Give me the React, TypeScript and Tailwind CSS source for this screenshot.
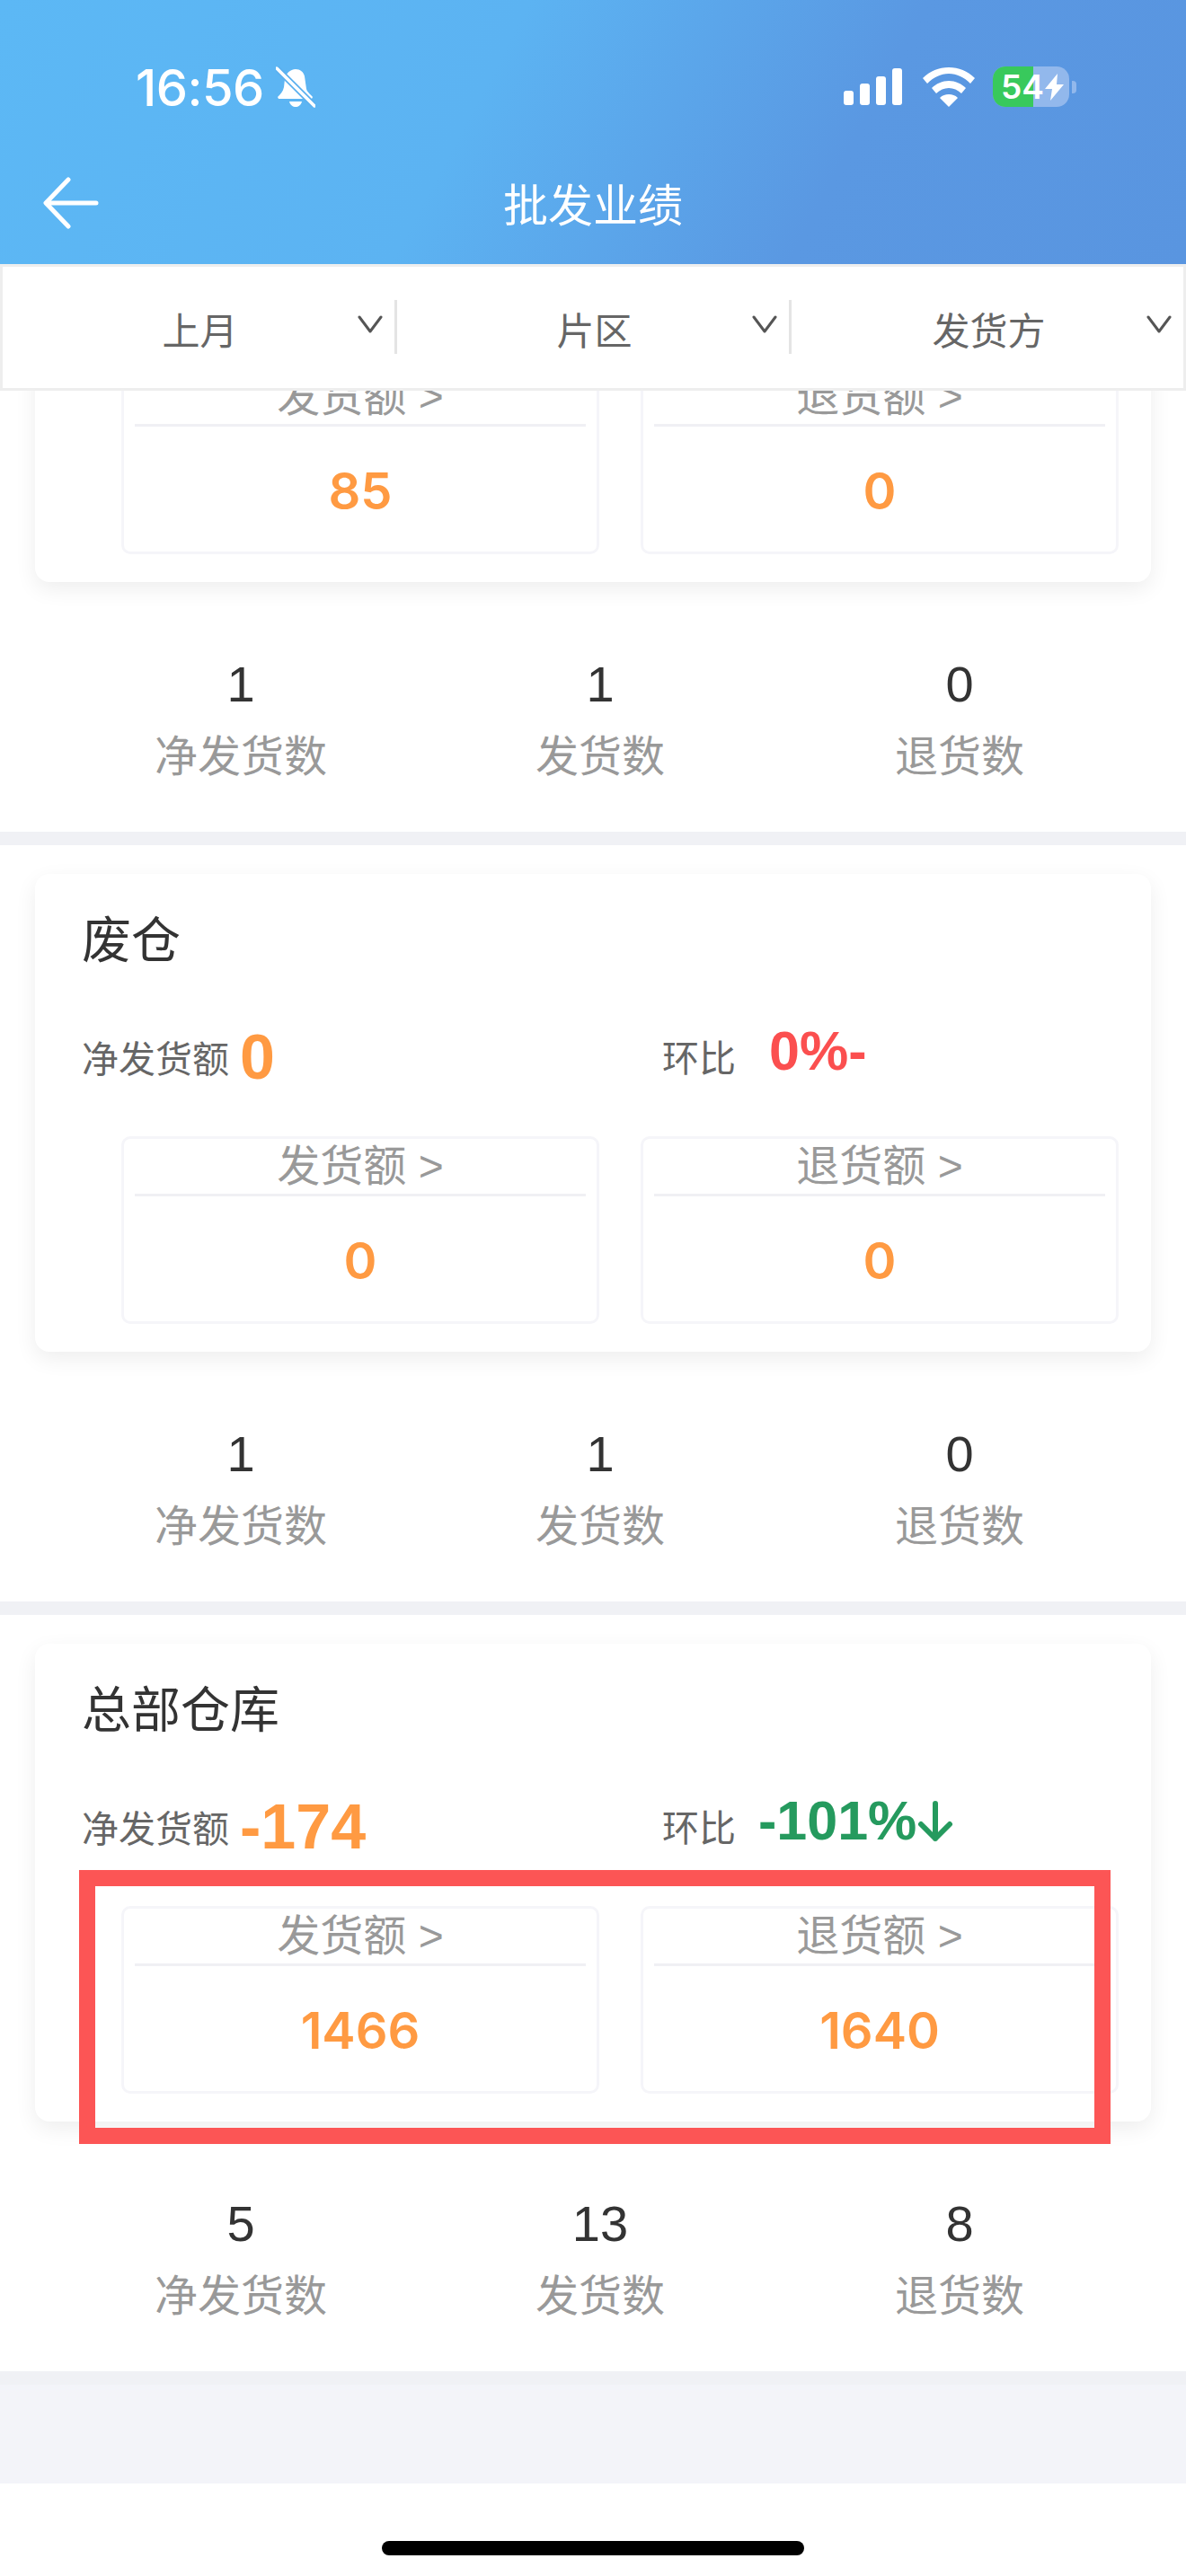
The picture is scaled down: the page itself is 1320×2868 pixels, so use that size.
import React from "react";

const CJK = '"Liberation Sans","Noto Sans CJK SC",sans-serif';
const NUM = '"Inter","Noto Sans CJK SC",sans-serif';

function Signal() {
  return (
    <svg width="66" height="42" viewBox="0 0 66 42" fill="white">
      <rect x="0" y="25" width="11" height="16" rx="3" />
      <rect x="18" y="17" width="11" height="24" rx="3" />
      <rect x="36" y="9" width="11" height="32" rx="3" />
      <rect x="54" y="0" width="11" height="41" rx="3" />
    </svg>
  );
}

function Wifi() {
  return (
    <svg width="58" height="44" viewBox="0 0 58 44" fill="white">
      <path d="M29 0C18 0 8 4 0 12l5 6C12 11 20 7 29 7s17 4 24 11l5-6C50 4 40 0 29 0z" />
      <path d="M29 15c-7 0-14 3-19 8l5 6c4-4 9-6 14-6s10 2 14 6l5-6c-5-5-12-8-19-8z" />
      <path d="M29 30c-4 0-7 1-10 4l10 10 10-10c-3-3-6-4-10-4z" />
    </svg>
  );
}

function Bell() {
  return (
    <svg width="44" height="46" viewBox="0 0 44 46" fill="white" className="ml-[13px]">
      <path d="M22 3c5 0 9 3 10 8l2 14c1 4 5 6 7 9l-1 2H3l-1-2c3-3 6-6 7-11l1-9c1-6 6-11 12-11z" />
      <path d="M15 39h14c-1 4-4 6-7 6s-6-2-7-6z" />
      <path d="M0 1l42 42" stroke="#5bb0ef" strokeWidth="7" />
      <path d="M1 2l42 42" stroke="white" strokeWidth="3.5" strokeLinecap="round" />
    </svg>
  );
}

function Battery() {
  return (
    <div className="flex items-center">
      <div className="relative w-[85px] h-[45px] rounded-[14px] bg-[#92b8ec] overflow-hidden">
        <div className="w-[45px] h-full bg-[#38c95c]" />
        <div className="absolute left-[9px] top-0 h-full flex items-center text-white text-[37px] font-semibold leading-none" style={{ fontFamily: NUM }}>
          54
        </div>
        <svg className="absolute left-[58px] top-[8px]" width="22" height="30" viewBox="0 0 22 30" fill="white">
          <path d="M14 0L0 17h8L6 30l15-18h-8z" />
        </svg>
      </div>
      <div className="ml-[3px] w-[5px] h-[14px] rounded-r-[4px] bg-[#92b8ec]" />
    </div>
  );
}

function Header() {
  return (
    <header className="h-[294px] bg-[linear-gradient(118deg,#5cb8f5_0%,#5cb3f2_40%,#5a98e2_70%,#5995e0_100%)]">
      <div className="h-[197px] pl-[151px] pr-[122px] pt-[74px] flex items-start justify-between">
        <div className="flex items-start">
          <span className="text-white text-[56px] leading-[48px] font-medium" style={{ fontFamily: NUM, letterSpacing: "-0.5px" }}>16:56</span>
          <Bell />
        </div>
        <div className="flex items-start">
          <div className="mt-[2px] mr-[22px]"><Signal /></div>
          <div className="mt-[1px] mr-[20px]"><Wifi /></div>
          <Battery />
        </div>
      </div>
      <div className="relative h-[60px] flex items-center justify-center">
        <svg className="absolute left-[47px] top-0" width="64" height="58" viewBox="0 0 64 58" fill="none" stroke="white" strokeWidth="5" strokeLinecap="round" strokeLinejoin="round">
          <path d="M29 3L4 29l25 26M5 29h55" />
        </svg>
        <span className="text-white text-[50px] leading-[60px] mt-[6px]">批发业绩</span>
      </div>
    </header>
  );
}

function FilterCell({ label, divider }: { label: string; divider: boolean }) {
  return (
    <div className="relative w-[439px] shrink-0 h-full flex items-center justify-center">
      <span className="text-[42px] leading-none text-[#666666] mt-[10px]">{label}</span>
      <svg className="absolute right-[16px] top-[54px]" width="28" height="20" viewBox="0 0 28 20" fill="none" stroke="#555555" strokeWidth="3" strokeLinecap="round" strokeLinejoin="round">
        <path d="M2 2l12 16L26 2" />
      </svg>
      {divider && <div className="absolute right-0 top-[37px] w-[3px] h-[60px] bg-[#e4e4e4]" />}
    </div>
  );
}

function FilterBar() {
  return (
    <div className="relative z-10 h-[141px] border-[3px] border-[#eeeeee] bg-white flex overflow-hidden">
      <FilterCell label="上月" divider />
      <FilterCell label="片区" divider />
      <FilterCell label="发货方" divider={false} />
    </div>
  );
}

function SubBox({ label, value }: { label: string; value: string }) {
  return (
    <div className="h-[209px] border-[3px] border-[#f5f5f9] rounded-[10px] px-[9px] flex flex-col">
      <div className="h-[64px] mx-[3px] border-b-[3px] border-[#f0f0f4] flex items-center justify-center text-[#999999] text-[48px] leading-none">
        {label} &gt;
      </div>
      <div className="flex-1 pt-[44px] text-center text-[#ff9a42] text-[56px] leading-none font-semibold" style={{ fontFamily: NUM }}>
        {value}
      </div>
    </div>
  );
}

type Sec = {
  title: string;
  net: string;
  rate: string;
  rateColor: string;
  rateMl: string;
  down: boolean;
  ship: string;
  ret: string;
  stats: [string, string, string];
};

function Stat({ value, label }: { value: string; label: string }) {
  return (
    <div className="flex flex-col items-center">
      <div className="text-[56px] leading-[64px] text-[#333333]">{value}</div>
      <div className="mt-[17px] text-[48px] leading-[64px] text-[#999999]">{label}</div>
    </div>
  );
}

function Section({ s }: { s: Sec }) {
  return (
    <section>
      <div className="h-[842px] bg-white pt-[32px] px-[39px]">
        <div className="h-[532px] w-[1242px] bg-white rounded-[16px] shadow-[0_8px_24px_rgba(0,0,0,0.07)] pt-[44px] flex flex-col">
          <div className="pl-[52px] h-[60px] text-[55px] leading-[60px] text-[#333333]">{s.title}</div>
          <div className="h-[90px] mt-[53px] flex">
            <div className="w-[698px] pl-[52px] flex items-baseline">
              <span className="text-[41px] text-[#666666] leading-[84px] whitespace-nowrap -translate-y-[2px]">净发货额</span>
              <span className="ml-[12px] text-[70px] font-bold text-[#ff9a42] leading-[84px] translate-y-[5px]">{s.net}</span>
            </div>
            <div className="flex translate-y-[7px]">
              <span className="text-[41px] text-[#666666] leading-[84px] whitespace-nowrap">环比</span>
              <span className={`${s.rateMl} ${s.rateColor} text-[61px] font-semibold leading-[66px] flex items-center self-start`}>
                {s.rate}
                {s.down && (
                  <svg className="ml-[1px] mt-[2px]" width="40" height="46" viewBox="0 0 40 46" fill="none" stroke="#259a5e" strokeWidth="6" strokeLinecap="round" strokeLinejoin="round">
                    <path d="M20 3v39M4 26l16 16 16-16" />
                  </svg>
                )}
              </span>
            </div>
          </div>
          <div className="mt-[45px] pl-[96px] pr-[36px] grid grid-cols-2 gap-[46px]">
            <SubBox label="发货额" value={s.ship} />
            <SubBox label="退货额" value={s.ret} />
          </div>
        </div>
        <div className="mt-[82px] ml-[29px] w-[1200px] grid grid-cols-3">
          <Stat value={s.stats[0]} label="净发货数" />
          <Stat value={s.stats[1]} label="发货数" />
          <Stat value={s.stats[2]} label="退货数" />
        </div>
      </div>
      <div className="h-[15px] bg-[#f0f1f5]" />
    </section>
  );
}

const GREEN = "text-[#259a5e]";
const RED = "text-[#fb4f4f]";

const sections: Sec[] = [
  { title: "", net: "85", rate: "0%-", rateColor: RED, rateMl: "ml-[37px]", down: false, ship: "85", ret: "0", stats: ["1", "1", "0"] },
  { title: "废仓", net: "0", rate: "0%-", rateColor: RED, rateMl: "ml-[37px]", down: false, ship: "0", ret: "0", stats: ["1", "1", "0"] },
  { title: "总部仓库", net: "-174", rate: "-101%", rateColor: GREEN, rateMl: "ml-[25px]", down: true, ship: "1466", ret: "1640", stats: ["5", "13", "8"] },
];

export default function App() {
  return (
    <div className="relative w-[1320px] h-[2868px] overflow-hidden bg-white" style={{ fontFamily: CJK }}>
      <Header />
      <FilterBar />
      <div className="overflow-hidden">
        <div className="mt-[-351px]">
          {sections.map((s, i) => (
            <Section key={i} s={s} />
          ))}
        </div>
      </div>
      <div className="h-[110px] bg-[#f3f4f9]" />
      <div className="mt-[64px] mx-auto w-[470px] h-[16px] rounded-full bg-black" />
      <div className="absolute left-[88px] top-[2082px] w-[1148px] h-[305px] border-[18px] border-[#fc5555]" />
    </div>
  );
}
